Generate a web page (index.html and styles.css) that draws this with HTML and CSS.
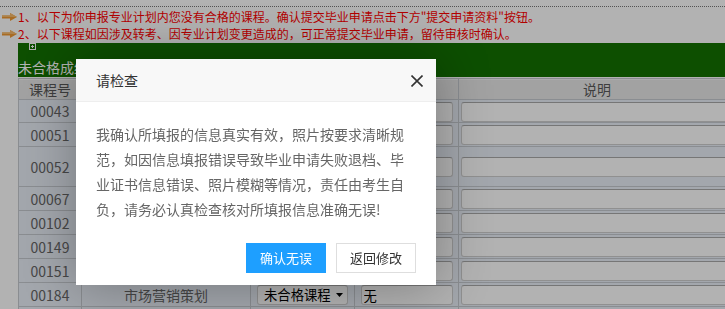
FILE: index.html
```html
<!DOCTYPE html>
<html lang="zh-CN">
<head>
    <meta charset="UTF-8">
    <meta name="viewport" content="width=device-width, initial-scale=1.0">
    <title>未合格成绩</title>
    <link rel="stylesheet" href="styles.css">
</head>
<body>
    <div class="tips">
        <p><svg class="arrow" width="15" height="8" viewBox="0 0 15 8"><path d="M0 2.5H8V0L15 4L8 8V5.5H0Z" fill="#f19a33"/><path d="M0 2.5H8V0L15 4L8 4H0Z" fill="#f8bb6a"/></svg>1、以下为你申报专业计划内您没有合格的课程。确认提交毕业申请点击下方"提交申请资料"按钮。</p>
        <p><svg class="arrow" width="15" height="8" viewBox="0 0 15 8"><path d="M0 2.5H8V0L15 4L8 8V5.5H0Z" fill="#f19a33"/><path d="M0 2.5H8V0L15 4L8 4H0Z" fill="#f8bb6a"/></svg>2、以下课程如因涉及转考、因专业计划变更造成的，可正常提交毕业申请，留待审核时确认。</p>
    </div>

    <div class="score-box">
        <div class="score-head">
            <svg class="toggle" width="7" height="7" viewBox="0 0 7 7"><rect x="0.5" y="0.5" width="6" height="6" fill="none" stroke="#fff"/><path d="M3.5 2V5M2 3.5H5" stroke="#fff"/></svg>
            <div class="score-title">未合格成绩</div>
        </div>
        <table class="score-table">
            <tr class="row-head">
                <th class="c1">课程号</th>
                <th class="c2"></th>
                <th class="c3"></th>
                <th class="c4"></th>
                <th class="c5">说明</th>
            </tr>
            <tr class="row-first">
                <td>00043</td>
                <td></td>
                <td></td>
                <td><input class="box-sm" type="text"></td>
                <td class="c5"><input class="box-lg" type="text"></td>
            </tr>
            <tr>
                <td>00051</td>
                <td></td>
                <td></td>
                <td><input class="box-sm" type="text"></td>
                <td class="c5"><input class="box-lg" type="text"></td>
            </tr>
            <tr class="row-tall">
                <td>00052</td>
                <td></td>
                <td></td>
                <td><input class="box-sm" type="text"></td>
                <td class="c5"><input class="box-lg" type="text"></td>
            </tr>
            <tr>
                <td>00067</td>
                <td></td>
                <td></td>
                <td><input class="box-sm" type="text"></td>
                <td class="c5"><input class="box-lg" type="text"></td>
            </tr>
            <tr>
                <td>00102</td>
                <td></td>
                <td></td>
                <td><input class="box-sm" type="text"></td>
                <td class="c5"><input class="box-lg" type="text"></td>
            </tr>
            <tr>
                <td>00149</td>
                <td></td>
                <td></td>
                <td><input class="box-sm" type="text"></td>
                <td class="c5"><input class="box-lg" type="text"></td>
            </tr>
            <tr>
                <td>00151</td>
                <td></td>
                <td></td>
                <td><input class="box-sm" type="text"></td>
                <td class="c5"><input class="box-lg" type="text"></td>
            </tr>
            <tr>
                <td>00184</td>
                <td>市场营销策划</td>
                <td><span class="select">未合格课程<svg width="7" height="4" viewBox="0 0 7 4"><path d="M0 0H7L3.5 4Z" fill="#000"/></svg></span></td>
                <td><input class="box-sm" type="text" value="无"></td>
                <td class="c5"><input class="box-lg" type="text"></td>
            </tr>
            <tr>
                <td></td>
                <td></td>
                <td></td>
                <td></td>
                <td class="c5"></td>
            </tr>
        </table>
    </div>

    <div class="shade"></div>
    <div class="layer">
        <div class="layer-title">
            请检查
            <a class="layer-close" href="#"><svg width="12" height="12" viewBox="0 0 12 12"><path d="M0.5 0.5L11.5 11.5M11.5 0.5L0.5 11.5" stroke="#333" stroke-width="1.6"/></svg></a>
        </div>
        <div class="layer-content">我确认所填报的信息真实有效，照片按要求清晰规范，如因信息填报错误导致毕业申请失败退档、毕业证书信息错误、照片模糊等情况，责任由考生自负，请务必认真检查核对所填报信息准确无误!</div>
        <div class="layer-btns">
            <a class="btn btn-ok" href="#">确认无误</a>
            <a class="btn" href="#">返回修改</a>
        </div>
    </div>
</body>
</html>
```

FILE: styles.css
```css
body {
    margin: 0;
    font-family: "Noto Sans CJK SC", sans-serif;
    background-color: #fff;
    overflow: hidden;
}

.tips {
    margin-top: 6px;
    padding: 1px 0 1px 2px;
    border-top: 1px dotted #777;
}

.tips p {
    margin: 0;
    display: flex;
    align-items: center;
    gap: 1px;
    height: 17px;
    font-size: 12px;
    line-height: 17px;
    color: #f00;
    white-space: nowrap;
}

.score-box {
    margin-left: 18px;
    width: 718px;
}

.score-head {
    height: 34px;
    background-color: #147200;
}

.toggle {
    display: block;
    margin-left: 11px;
}

.score-title {
    margin-top: 7px;
    font-size: 14px;
    line-height: 20px;
    color: #fff;
    white-space: nowrap;
}

.score-table {
    width: 718px;
    margin-top: 1px;
    border-collapse: collapse;
    table-layout: fixed;
    font-size: 14px;
    color: #666;
}

.score-table th,
.score-table td {
    padding: 0;
    border: 1px solid #c6cad0;
    text-align: center;
    white-space: nowrap;
    overflow: hidden;
}

.score-table th {
    height: 20px;
    font-weight: normal;
    line-height: 20px;
    color: #5a5a5a;
    background-color: #e9e9e9;
    box-shadow: inset 0 1px 0 #f7f7f7;
}

.score-table td {
    height: 23px;
    line-height: 18px;
    background-color: #eaeff8;
}

.score-table .row-first td {
    height: 22px;
}

.score-table .row-tall td {
    height: 39px;
}

.c1 { width: 62px; }
.c2 { width: 168px; }
.c3 { width: 103px; }
.c4 { width: 103px; }
.c5 { width: auto; }

.score-table td.c5 {
    text-align: left;
    padding-left: 2px;
}

.score-table input,
.select {
    box-sizing: border-box;
    height: 20px;
    vertical-align: middle;
    border: 1px solid #cfcfcf;
    border-top-color: #a9a9a9;
    border-radius: 3px;
    background-color: #fff;
    font-family: "Noto Sans CJK SC", sans-serif;
    font-size: 13.33px;
    color: #000;
}

.score-table input {
    padding: 0 2px;
    outline: none;
}

.box-sm {
    width: 92px;
}

.box-lg {
    width: 272px;
}

.select {
    display: inline-flex;
    align-items: center;
    justify-content: space-between;
    width: 91px;
    padding: 0 4px 0 6px;
    line-height: 18px;
    text-align: left;
}

.shade {
    position: fixed;
    top: 0;
    left: 0;
    right: 0;
    bottom: 0;
    background-color: rgba(0, 0, 0, 0.3);
}

.layer {
    position: fixed;
    top: 59px;
    left: 76px;
    width: 360px;
    background-color: #fff;
    box-shadow: 1px 1px 50px rgba(0, 0, 0, 0.3);
}

.layer-title {
    position: relative;
    height: 42px;
    padding: 0 20px;
    line-height: 42px;
    font-size: 14px;
    color: #333;
    background-color: #f8f8f8;
    border-bottom: 1px solid #eee;
}

.layer-close {
    position: absolute;
    top: 16px;
    right: 13px;
    width: 12px;
    height: 12px;
    line-height: 0;
}

.layer-content {
    padding: 20px;
    font-size: 14px;
    line-height: 25px;
    color: #666;
}

.layer-btns {
    display: flex;
    justify-content: flex-end;
    gap: 10px;
    padding: 1px 20px 12px;
}

.btn {
    box-sizing: border-box;
    width: 80px;
    height: 30px;
    line-height: 28px;
    text-align: center;
    font-size: 13px;
    color: #333;
    text-decoration: none;
    background-color: #fff;
    border: 1px solid #dedede;
}

.btn-ok {
    color: #fff;
    background-color: #1e9fff;
    border-color: #1e9fff;
}
```
